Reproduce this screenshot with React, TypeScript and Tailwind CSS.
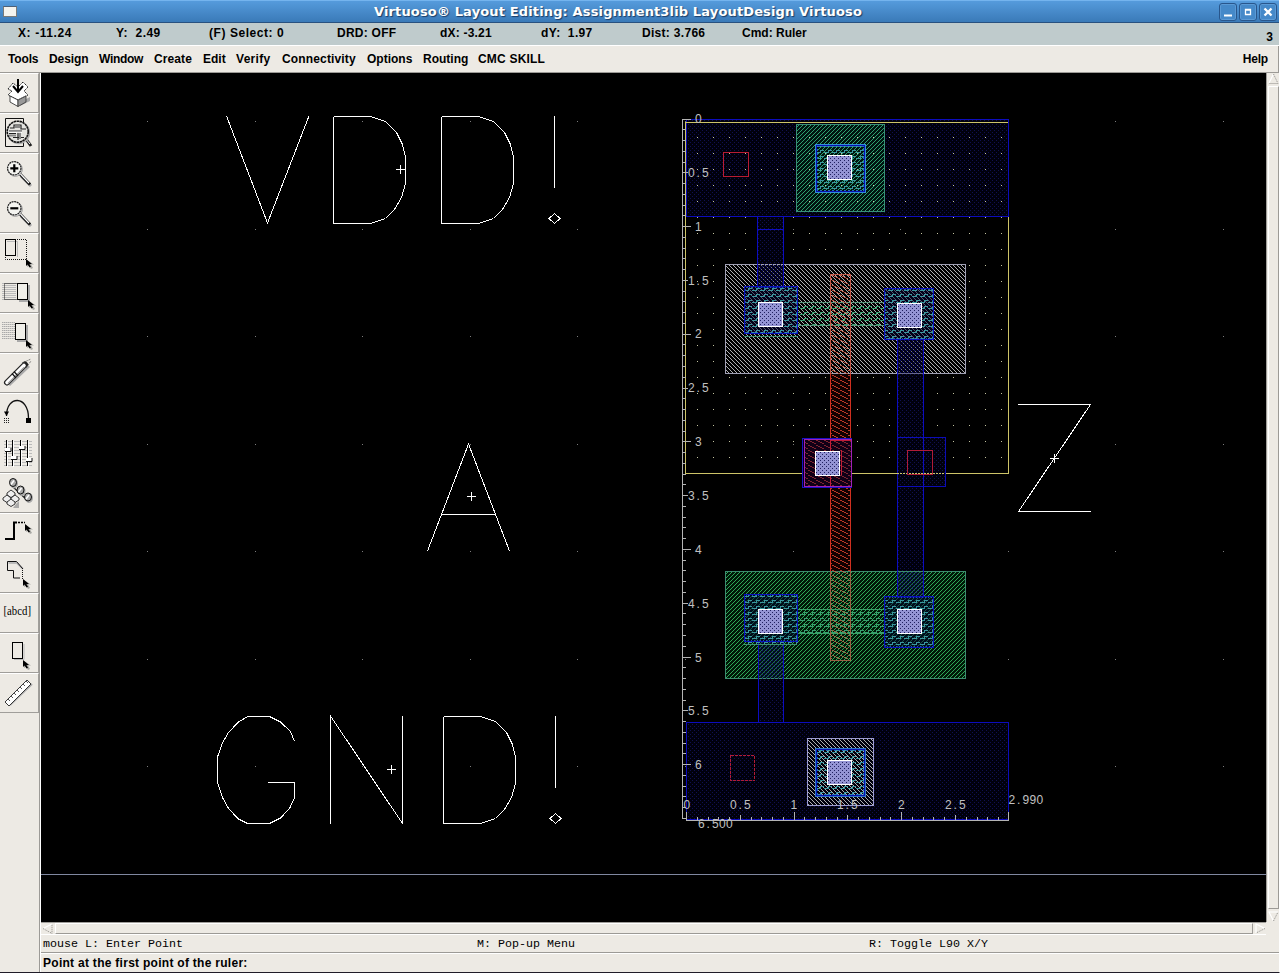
import React from "react";

type Pt = [number, number];

const statusItems: { text: string; cls: string }[] = [
  { text: "X: -11.24", cls: "w-[98px] tracking-[0.6px]" },
  { text: "Y:  2.49", cls: "w-[93px] tracking-[0.45px]" },
  { text: "(F) Select: 0", cls: "w-[128px] tracking-[0.56px]" },
  { text: "DRD: OFF", cls: "w-[103px] tracking-[0.25px]" },
  { text: "dX: -3.21", cls: "w-[101px] tracking-[0.2px]" },
  { text: "dY:  1.97", cls: "w-[101px] tracking-[0.35px]" },
  { text: "Dist: 3.766", cls: "w-[100px] tracking-[0.3px]" },
  { text: "Cmd: Ruler", cls: "w-[100px] tracking-[0px]" },
];

const menuItems: { text: string; cls: string }[] = [
  { text: "Tools", cls: "w-[41px] tracking-[-0.15px]" },
  { text: "Design", cls: "w-[50px] tracking-[-0.1px]" },
  { text: "Window", cls: "w-[55px] tracking-[-0.3px]" },
  { text: "Create", cls: "w-[49px] tracking-[0.1px]" },
  { text: "Edit", cls: "w-[33px] tracking-[0px]" },
  { text: "Verify", cls: "w-[46px] tracking-[0.3px]" },
  { text: "Connectivity", cls: "w-[85px] tracking-[0.15px]" },
  { text: "Options", cls: "w-[56px] tracking-[0px]" },
  { text: "Routing", cls: "w-[55px] tracking-[0px]" },
  { text: "CMC SKILL", cls: "w-[90px] tracking-[0.2px]" },
];

function Bitmap({ id, rows, color, bg }: { id: string; rows: string[]; color: string; bg?: string }) {
  const w = rows[0].length;
  const h = rows.length;
  return (
    <pattern id={id} width={w} height={h} patternUnits="userSpaceOnUse">
      {bg && <rect width={w} height={h} fill={bg} />}
      {rows.flatMap((row, y) =>
        row.split("").map((c, x) => (c === "#" ? <rect key={`${x}-${y}`} x={x} y={y} width={1} height={1} fill={color} /> : null))
      )}
    </pattern>
  );
}

const slash = ["...#", "..#.", ".#..", "#..."];
const backslash = ["#...", ".#..", "..#.", "...#"];
const dots = ["#...", "....", "..#.", "...."];
const wideBack = ["##......", "..##....", "....##..", "......##", "........"];
const brick = ["....####", "....#...", "#####...", "........", "........", "........"];

function Box(props: { x: number; y: number; r: number; b: number; stroke: string; fill?: string; dash?: string }) {
  const { x, y, r, b, stroke, fill = "none", dash } = props;
  return (
    <rect x={x + 0.5} y={y + 0.5} width={r - x} height={b - y} fill={fill} stroke={stroke} strokeDasharray={dash} />
  );
}

function Contact({ x, y }: { x: number; y: number }) {
  return <Box x={x} y={y} r={x + 24} b={y + 24} stroke="#ffffff" fill="url(#contact)" />;
}

function Cross({ x, y }: { x: number; y: number }) {
  return <path d={`M${x - 4} ${y + 0.5}h9M${x + 0.5} ${y - 4}v9`} stroke="#fff" />;
}

function Line({ pts }: { pts: Pt[] }) {
  return <polyline points={pts.map((p) => `${p[0]},${p[1]}`).join(" ")} fill="none" stroke="#fff" />;
}

function LetterD({ x, y }: { x: number; y: number }) {
  const shape: Pt[] = [
    [0, 0], [37, 0], [52, 5], [63, 16], [69, 28], [72, 41], [72, 67], [68, 81], [61, 93], [52, 102], [37, 107], [0, 107], [0, 0],
  ];
  return <Line pts={shape.map(([a, b]): Pt => [x + a + 0.5, y + b + 0.5])} />;
}

function Bang({ x, y }: { x: number; y: number }) {
  const cx = x + 0.5;
  return (
    <g fill="none" stroke="#fff">
      <path d={`M${cx} ${y}v72`} />
      <path d={`M${cx - 5.5} ${y + 102.5}l5.5 -5l5.5 5l-5.5 5z`} />
    </g>
  );
}

function Label({ x, y, text }: { x: number; y: number; text: string }) {
  const xs = text.split("").map((c, i) => x + i * 7 + (c === "." ? 1.5 : 0));
  return (
    <text x={xs.join(" ")} y={y} fontSize="12" fontWeight="400" fill="#c0c0c0" fontFamily="'Liberation Sans', sans-serif">
      {text}
    </text>
  );
}

function Ruler() {
  const verticalTicks = Array.from({ length: 65 }, (_, i) => i);
  const horizontalTicks = Array.from({ length: 30 }, (_, i) => i);
  return (
    <g stroke="#b4b4b4">
      <path d="M682.5 119V819M682 818.5H687M686 820.5H1009M1008.5 812V821" />
      {verticalTicks.map((i) => (
        <path key={i} d={`M683 ${Math.floor(119 + i * 10.76) + 0.5}h${i % 10 === 0 ? 8 : i % 5 === 0 ? 5 : 3}`} />
      ))}
      {horizontalTicks.map((i) => (
        <path key={i} d={`M${Math.floor(686.5 + i * 10.76) + 0.5} 820v${i % 10 === 0 ? -8 : i % 5 === 0 ? -5 : -3}`} />
      ))}
      <g stroke="none">
        {Array.from({ length: 13 }, (_, i) => (
          <Label key={i} x={i % 2 ? 688 : 695} y={Math.round(123 + i * 53.85)} text={String(i / 2)} />
        ))}
        {[683.5, 730, 790.5, 837, 898, 945].map((x, i) => (
          <Label key={x} x={x} y={809} text={String(i / 2)} />
        ))}
        <Label x={1008.5} y={804} text="2.990" />
        <Label x={698} y={828} text="6.500" />
      </g>
    </g>
  );
}

function ActiveContact({ x, y, r, b, cx, cy, extra }: { x: number; y: number; r: number; b: number; cx: number; cy: number; extra?: number }) {
  return (
    <g>
      <rect x={x} y={y} width={r - x + 1} height={b - y + 1} fill="#000030" fillOpacity="0.5" />
      <rect x={x} y={y} width={r - x + 1} height={b - y + 1 + (extra ?? 0)} fill="url(#brickTeal)" />
      {extra && <path d={`M${x} ${b + extra + 0.5}H${r}`} stroke="#3c9070" />}
      <Box x={x} y={y} r={r} b={b} stroke="#0a10c0" />
      <Box x={x + 1} y={y + 1} r={r - 1} b={b - 1} stroke="#1858b8" dash="1 2" />
      <Contact x={cx} y={cy} />
    </g>
  );
}

function TapContact({ y, cy, teal }: { y: number; cy: number; teal: string }) {
  return (
    <g>
      <Box x={815} y={y} r={865} b={y + 48} stroke={teal} fill="url(#brickTeal)" />
      <Box x={816} y={y + 1} r={864} b={y + 47} stroke="#0810b0" />
      <Box x={817} y={y + 2} r={863} b={y + 46} stroke="#2070c0" dash="2 2" />
      <Contact x={827} y={cy} />
    </g>
  );
}

function LayoutCanvas() {
  return (
    <svg className="block h-[849px] w-[1225px] shrink-0 bg-black" viewBox="41 73 1225 849" shapeRendering="crispEdges">
      <defs>
        <Bitmap id="metal" rows={dots} color="#101050" bg="#00000c" />
        <Bitmap id="metalOver" rows={dots} color="#181878" />
        <Bitmap id="hatchTeal" rows={slash} color="#2ea070" bg="#001410" />
        <Bitmap id="hatchGreen" rows={slash} color="#2ea858" bg="#001808" />
        <Bitmap id="hatchGray" rows={backslash} color="#b0b0b2" />
        <Bitmap id="contact" rows={dots} color="#202060" bg="#9494d4" />
        <Bitmap id="poly" rows={wideBack} color="#b83828" bg="#100000" />
        <Bitmap id="polyOver" rows={wideBack} color="#c05848" />
        <Bitmap id="polyBrown" rows={wideBack} color="#986844" />
        <Bitmap id="brickTeal" rows={brick} color="#3a98a0" />
        <Bitmap id="brickGreen" rows={brick} color="#38a070" />
      </defs>

      {Array.from({ length: 11 }, (_, i) =>
        Array.from({ length: 7 }, (_, j) => (
          <rect key={`${i}-${j}`} x={Math.floor(147.5 + i * 107.6)} y={Math.floor(121.5 + j * 107.55)} width={1} height={1} fill="#7c7c7c" />
        ))
      )}
      <path d="M41 874.5H1266" stroke="#8088a0" />

      <Line pts={[[226.5, 116], [267.5, 223], [309, 116]]} />
      <LetterD x={333} y={116} />
      <LetterD x={441} y={116} />
      <Bang x={554} y={116} />
      <Cross x={400} y={169} />
      <Line pts={[[427.5, 551], [468.5, 444], [509.5, 551]]} />
      <Line pts={[[442, 514.5], [496, 514.5]]} />
      <Cross x={471} y={496} />
      <Line
        pts={[
          [294.5, 741.5], [290.5, 731.5], [280.5, 722], [269.5, 716.5], [247.5, 716.5], [238.5, 722], [228.5, 732.5], [222.5, 743],
          [217.5, 757], [217.5, 782.5], [222.5, 797.5], [228.5, 808.5], [238.5, 819], [247.5, 823.5], [269.5, 823.5], [280.5, 818],
          [289.5, 808.5], [294.5, 798], [294.5, 782.5], [268, 782.5],
        ]}
      />
      <Line pts={[[330.5, 824], [330.5, 716], [402.5, 823.5], [402.5, 716]]} />
      <LetterD x={443} y={716} />
      <Bang x={555} y={716} />
      <Cross x={391} y={769} />
      <Line pts={[[1018, 404.5], [1090.5, 404.5], [1018.5, 511.5], [1091, 511.5]]} />
      <Cross x={1054} y={458} />

      <Box x={686} y={119} r={1008} b={216} stroke="#0c0cbc" fill="url(#metal)" />
      <Box x={686} y={722} r={1008} b={819} stroke="#0c0cbc" fill="url(#metal)" />
      <Box x={685} y={122} r={1008} b={473} stroke="#cdc468" />
      <path d="M1008.5 119V217" stroke="#0c0cbc" />

      <Box x={796} y={124} r={884} b={211} stroke="#389078" fill="url(#hatchTeal)" />
      {Array.from({ length: 20 }, (_, i) =>
        Array.from({ length: 21 }, (_, j) => (
          <rect key={`${i}-${j}`} x={697 + i * 16} y={137 + j * 16} width={1} height={1} fill="#c4c4a0" />
        ))
      )}
      <TapContact y={144} cy={155} teal="#3090d8" />

      <Box x={725} y={264} r={965} b={373} stroke="#a0a0b4" fill="url(#hatchGray)" />
      <Box x={725} y={571} r={965} b={678} stroke="#3c8c70" fill="url(#hatchGreen)" />

      <rect x={758} y={265} width={25} height={22} fill="#000040" fillOpacity="0.35" />
      <Box x={757} y={217} r={783} b={287} stroke="#0c0cc0" fill="url(#metalOver)" />
      <rect x={758} y={217} width={25} height={47} fill="url(#metal)" />
      <path d="M757 229.5H784" stroke="#0c0cc0" />
      <rect x={898} y={339} width={25} height={35} fill="#000040" fillOpacity="0.35" />
      <rect x={898} y={572} width={25} height={25} fill="#000040" fillOpacity="0.35" />
      <Box x={897} y={339} r={923} b={597} stroke="#0c0cc0" fill="url(#metalOver)" />
      <rect x={898} y={374} width={25} height={197} fill="url(#metal)" />
      <rect x={759} y={642} width={24} height={36} fill="#000040" fillOpacity="0.35" />
      <Box x={758} y={641} r={783} b={722} stroke="#0c0cc0" fill="url(#metalOver)" />
      <rect x={759} y={679} width={24} height={43} fill="url(#metal)" />

      <Box x={797} y={302} r={884} b={325} stroke="#58987c" fill="url(#brickGreen)" />
      <Box x={797} y={609} r={884} b={633} stroke="#38a068" fill="url(#brickGreen)" />

      <Box x={830} y={274} r={850} b={660} stroke="none" fill="url(#polyOver)" />
      <rect x={830} y={374} width={21} height={197} fill="url(#poly)" />
      <rect x={831} y={572} width={20} height={88} fill="url(#polyBrown)" />
      <path d="M830.5 374V571M850.5 374V571" stroke="#d03020" />
      <path d="M830.5 374V274.5H850.5V374" fill="none" stroke="#c45848" />
      <path d="M830.5 571V660.5H850.5V571" fill="none" stroke="#986044" />

      <ActiveContact x={744} y={286} r={797} b={333} cx={758} cy={302} extra={3} />
      <ActiveContact x={884} y={288} r={933} b={339} cx={897} cy={303} />
      <ActiveContact x={744} y={594} r={797} b={641} cx={758} cy={609} extra={3} />
      <ActiveContact x={884} y={596} r={933} b={647} cx={897} cy={609} />

      <Box x={802} y={438} r={851} b={487} stroke="#1c10c4" fill="#08001c" />
      <Box x={804} y={439} r={851} b={486} stroke="#a020b8" fill="url(#poly)" />
      <rect x={805} y={440} width={46} height={46} fill="#100040" fillOpacity="0.35" />
      <path d="M830.5 440V486M830 440.5H851M841.5 450V475" fill="none" stroke="#c01c38" />
      <Contact x={815} y={451} />

      <Box x={897} y={437} r={945} b={486} stroke="#0c0cb8" fill="url(#metal)" />
      <path d="M923.5 437V487" stroke="#0c0cc0" />
      <path d="M897 473.5H945" stroke="#cdc468" strokeDasharray="2 1" />
      <Box x={907} y={450} r={932} b={474} stroke="#b01c38" />
      <Box x={723} y={152} r={748} b={176} stroke="#b81c34" />
      <Box x={730} y={755} r={754} b={780} stroke="#b01c38" dash="3 1" />

      <Box x={807} y={738} r={873} b={805} stroke="#9c9cd0" fill="url(#hatchGray)" />
      <TapContact y={748} cy={760} teal="#3078c8" />
      <Ruler />
    </svg>
  );
}

function Cursor({ x, y }: { x: number; y: number }) {
  return (
    <g transform={`translate(${x} ${y - 1})`}>
      <path d="M1 1V8L3 6.500L5 10L7 9L5 5.500H8Z" fill="#a8a8a4" />
      <path d="M0 0V7L1.600 5.600L3.500 8.500L5 7.700L3.400 5H6Z" fill="#000" />
    </g>
  );
}

function Lens({ sign }: { sign: string }) {
  return (
    <g>
      <path d="M21 23L31 33" stroke="#aaa" strokeWidth="3" />
      <path d="M19.500 20.500L30 31.500" stroke="#111" strokeWidth="3" />
      <path d="M19.500 20L29 30" stroke="#fff" strokeWidth="1.200" />
      <circle cx="15.300" cy="16.300" r="7" fill="#fff" stroke="#999" />
      <circle cx="14.300" cy="15.300" r="6.700" fill="#f4f4f0" stroke="#222" strokeWidth="1.300" strokeDasharray="2 .6" />
      <path d={sign} stroke="#000" strokeWidth="2.200" />
    </g>
  );
}

const rungs = [10, 12, 14, 16, 18, 20, 22, 24, 26];

const icons: React.ReactNode[] = [
  <g>
    <path d="M20 33L30 28V24L20 29Z" fill="#aaa" />
    <path d="M8 16L13 10L18 14L23 9L28 14L24 18L28 22L18 27L8 22L12 18Z" fill="#fff" stroke="#222" strokeDasharray="1.500 .7" />
    <path d="M10 23V29L18 33.500V27Z" fill="#fff" stroke="#222" strokeWidth=".8" />
    <path d="M18 27V33.500L26 29V23Z" fill="#999" stroke="#333" strokeWidth=".8" />
    <path d="M18 6V18M13 13L18 19L23 13" fill="none" stroke="#000" strokeWidth="2" />
  </g>,
  <g fill="none">
    <path d="M23.500 9V5.500H5.500V33.500H23.500V29" stroke="#111" />
    <path d="M26 26L31 33" stroke="#222" strokeWidth="3" />
    <path d="M25 25L30 31" stroke="#fff" />
    <circle cx="18.700" cy="19.700" r="10.500" stroke="#aaa" strokeWidth="2" />
    <circle cx="17.700" cy="18.700" r="10.500" fill="#e4e4e0" stroke="#111" strokeWidth="1.600" strokeDasharray="2.500 .5" />
    <path d="M10 15H14V12H21V16H26M9 20.500H16M18 19V27M13 24.500H24" stroke="#222" strokeWidth="1.200" />
    <path d="M9 18H22M9 22.500H16M20 18V26M15 14H20" stroke="#888" strokeWidth="2" />
    <path d="M9 19.300H22" stroke="#fff" />
  </g>,
  <Lens sign="M10.300 15.300H18.300M14.300 11.300V19.300" />,
  <Lens sign="M10.300 15.300H18.300" />,
  <g fill="none">
    <path d="M7 8.500H17.500V24" stroke="#bbb" />
    <rect x="5.500" y="6.500" width="10" height="16" stroke="#000" />
    <path d="M17 6.500H26.500V26.500H5.500V24" stroke="#111" strokeDasharray="1 1" />
    <Cursor x={26} y={27} />
  </g>,
  <g fill="none">
    {rungs.map((y) => <path key={y} d={`M2 ${y + 0.5}H16`} stroke="#bbb" />)}
    <rect x="4.500" y="10.500" width="13" height="16" stroke="#111" strokeDasharray="1 1" />
    <path d="M19 28H29V12" stroke="#aaa" strokeWidth="2" />
    <rect x="17.500" y="10.500" width="10" height="16" fill="#f0efe9" stroke="#000" />
    <Cursor x={28} y={28} />
  </g>,
  <g fill="none">
    {rungs.map((y) => <path key={y} d={`M2 ${y - 0.5}H15`} stroke="#aaa" strokeDasharray="1.500 .5" />)}
    <path d="M17 28H27V12" stroke="#aaa" strokeWidth="2" />
    <rect x="15.500" y="10.500" width="10" height="16" fill="#f0efe9" stroke="#000" />
    <Cursor x={26} y={28} />
  </g>,
  <g fill="none">
    <path d="M9 32L29 13" stroke="#aaa" strokeWidth="3" />
    <path d="M7 29.500L25 11.500" stroke="#222" strokeWidth="6" strokeLinecap="round" />
    <path d="M7 29.500L24 12.500" stroke="#fff" strokeWidth="3.600" strokeLinecap="round" />
    <path d="M8 30.500L24 14.500" stroke="#999" strokeWidth="1.200" />
    <path d="M12 20.500L16 25M14 18.500L18 23" stroke="#111" strokeWidth="1.200" />
    <path d="M22 10L31 6M26 15L31 8" stroke="#555" strokeDasharray="1 1" />
  </g>,
  <g fill="none">
    <path d="M6.500 23C6.500 2 28.500 2 28.500 25" stroke="#111" strokeWidth="1.300" />
    <path d="M4 18.500H9L6.500 23Z" fill="#000" />
    <path d="M4 25.500H10M4 27.500H10M4 29.500H10" stroke="#222" strokeDasharray="1 1" />
    <rect x="26" y="25" width="5" height="5" fill="#000" />
  </g>,
  <g>
    {[8, 11, 14, 17, 20, 23, 26, 29, 32].map((y) => <path key={y} d={`M4 ${y + 0.5}H32`} stroke="#bbb" />)}
    {[[6, 15], [12, 23], [20, 13], [27, 25]].map(([x, y]) => (
      <g key={x}>
        <path d={`M${x + 1.5} 8V34`} stroke="#fff" />
        <path d={`M${x + 0.5} 7V33`} stroke="#000" />
        <rect x={x - 1} y={y} width="6" height="3" fill="#fff" />
        <path d={`M${x - 1} ${y + 3.5}H${x + 5}V${y}`} stroke="#111" fill="none" />
      </g>
    ))}
  </g>,
  <g>
    <path d="M11 12L29 29" stroke="#222" strokeWidth="1.300" />
    {[[13, 9.5], [20.5, 17], [28, 24]].map(([x, y]) => (
      <g key={x}>
        <ellipse cx={x + 1} cy={y + 1} rx="4" ry="5" fill="#aaa" />
        <ellipse cx={x} cy={y} rx="3.500" ry="4" fill="#aaa" stroke="#111" />
        <path d={`M${x - 2} ${y + 2}L${x + 1} ${y - 2}`} stroke="#fff" strokeWidth="1.500" />
      </g>
    ))}
    <path d="M13 35H19V28L16 31Z" fill="#aaa" />
    {[[11, 20], [7, 25], [15, 25], [11, 29]].map(([x, y]) => (
      <path key={`${x}-${y}`} d={`M${x - 4} ${y}L${x} ${y - 3}L${x + 4} ${y}V${y + 2}L${x} ${y + 4.5}L${x - 4} ${y + 2}Z`} fill="#eee" stroke="#222" strokeWidth=".9" />
    ))}
  </g>,
  <g fill="none">
    <path d="M5 26H14V9.500H17" stroke="#000" strokeWidth="2" />
    <path d="M18 9.500H25" stroke="#000" strokeWidth="1.500" strokeDasharray="2 1" />
    <Cursor x={25} y={12} />
  </g>,
  <g fill="none">
    <path d="M8.500 10H17L23 16" stroke="#bbb" strokeWidth="2" />
    <path d="M22.500 15.500L16.500 8.500H7.500V17.500H13.500V25H20" stroke="#111" />
    <path d="M22.500 15V26" stroke="#111" strokeDasharray="1 1" />
    <Cursor x={23} y={27} />
  </g>,
  <text x="3.500" y="22" fontSize="13" fontWeight="400" textLength="27.500" lengthAdjust="spacingAndGlyphs" fontFamily="'Liberation Serif', serif" fill="#000">
    [abcd]
  </text>,
  <g fill="none">
    <path d="M14 26.500H24V11" stroke="#bbb" />
    <rect x="12.500" y="9.500" width="10" height="16" stroke="#000" />
    <Cursor x={23} y={28} />
  </g>,
  <g fill="none">
    <path d="M10 32L32 11" stroke="#aaa" strokeWidth="2" />
    <path d="M5 29L27 7L31 11L9 33Z" fill="#fff" stroke="#222" strokeWidth=".9" />
    <path d="M8 26l2 2M11 23l2 2M14 20l2 2M17 17l2 2M20 14l2 2M23 11l2 2M26 8l2 2" stroke="#444" strokeWidth=".9" />
  </g>,
];

function WindowButton({ children }: { children: React.ReactNode }) {
  return (
    <span className="flex h-[18px] w-[18px] items-center justify-center rounded-[3px] border border-[#28568c] bg-[#4589c9] shadow-[inset_0_0_0_1px_#5b9ad6]">
      <svg className="size-3 shrink-0" viewBox="0 0 12 12">
        {children}
      </svg>
    </span>
  );
}

function ScrollArrow({ d, light }: { d: string; light: string }) {
  return (
    <svg className="size-[11px] shrink-0 bg-[#edeae4]" viewBox="0 0 11 11" fill="none">
      <path d={light} stroke="#fff" strokeWidth="1.200" />
      <path d={d} stroke="#8c8a86" strokeDasharray="1 1" />
    </svg>
  );
}

export default function App() {
  return (
    <div className="flex h-[973px] w-[1280px] flex-col overflow-hidden border-b border-r border-b-[#201c28] border-r-white bg-[#edeae4] font-['Liberation_Sans',sans-serif] text-[12px] font-bold text-black">
      <header className="flex h-[23px] shrink-0 items-center border-b border-t border-b-[#28517f] border-t-[#74b4ee] bg-linear-to-b from-[#559bdc] to-[#3a7ab8] pl-[3px] pr-[2px]">
        <span className="h-[11px] w-[14px] border border-[#7a7a78] border-t-[#4c6078] bg-[#f4f3ee]" />
        <h1 className="flex-1 whitespace-pre text-center font-['DejaVu_Sans',sans-serif] text-[13px] leading-none tracking-[0.14px] text-white [text-shadow:1px_1px_1px_#1c3c64]">
          Virtuoso® Layout Editing: Assignment3lib LayoutDesign Virtuoso
        </h1>
        <div className="flex gap-[2px]">
          <WindowButton><path d="M2 9.500H10" stroke="#fff" strokeWidth="2" /></WindowButton>
          <WindowButton><path d="M3.500 3.500H8.500V8.500H3.500ZM3 4H9" fill="none" stroke="#fff" strokeWidth="1.300" /></WindowButton>
          <WindowButton><path d="M2.500 2.500L9.500 9.500M9.500 2.500L2.500 9.500" stroke="#fff" strokeWidth="2.300" /></WindowButton>
        </div>
      </header>

      <section className="flex h-[23px] shrink-0 border-b border-white bg-[#bfcbcc] pl-[18px] pr-[6px] leading-[20px]">
        {statusItems.map((s) => (
          <span key={s.text} className={`shrink-0 whitespace-pre ${s.cls}`}>{s.text}</span>
        ))}
        <span className="ml-auto pt-[4px]">3</span>
      </section>

      <nav className="flex h-[27px] shrink-0 items-center border-b border-r border-[#9c9a96] pl-[8px] pr-[10px]">
        {menuItems.map((m) => (
          <span key={m.text} className={`shrink-0 whitespace-nowrap ${m.cls}`}>{m.text}</span>
        ))}
        <span className="ml-auto tracking-[-0.2px]">Help</span>
      </nav>

      <div className="flex min-h-0 flex-1">
        <aside className="flex w-[40px] shrink-0 flex-col border-r border-[#9c9a96]">
          {icons.map((icon, i) => (
            <div key={i} className="h-[40px] w-[39px] shrink-0 border-b border-r border-t border-b-[#a09e9a] border-r-[#a09e9a] border-t-white">
              <svg className="block h-[38px] w-[38px]" viewBox="0 1 38 38">{icon}</svg>
            </div>
          ))}
        </aside>
        <main className="flex min-w-0 flex-1 flex-col border-l border-white">
          <div className="flex h-[849px] shrink-0">
            <LayoutCanvas />
            <div className="flex min-w-0 flex-1 flex-col border-l border-[#a09e9a] pl-px">
              <ScrollArrow light="M5.500 1L1 10" d="M5.500 1L10 10.500H1" />
              <div className="my-[2px] w-[11px] flex-1 border border-b-[#9c9a96] border-l-white border-r-[#9c9a96] border-t-white" />
              <ScrollArrow light="M5.500 10L1 1H10" d="M5.500 10L10 1" />
            </div>
          </div>
          <div className="flex h-[13px] w-[1225px] shrink-0 border-b border-t border-b-white border-t-[#a09e9a] pl-px">
            <ScrollArrow light="M1 5.500L10 1" d="M1 5.500L10 10.500V1" />
            <div className="mx-[2px] h-[11px] flex-1 border border-b-[#9c9a96] border-l-white border-r-[#9c9a96] border-t-white" />
            <ScrollArrow light="M10 5.500L1 1V10" d="M10 5.500L1 10" />
          </div>
          <div className="flex h-[18px] shrink-0 border-b border-[#9c9a96] pl-[2px] font-['Liberation_Mono',monospace] text-[11.67px] font-normal leading-[18px]">
            <span className="w-[434px]">mouse L: Enter Point</span>
            <span className="w-[392px]">M: Pop-up Menu</span>
            <span>R: Toggle L90 X/Y</span>
          </div>
          <div className="flex-1 border-t border-white pl-[2px] leading-[18px] tracking-[0.28px]">Point at the first point of the ruler:</div>
        </main>
      </div>
    </div>
  );
}
